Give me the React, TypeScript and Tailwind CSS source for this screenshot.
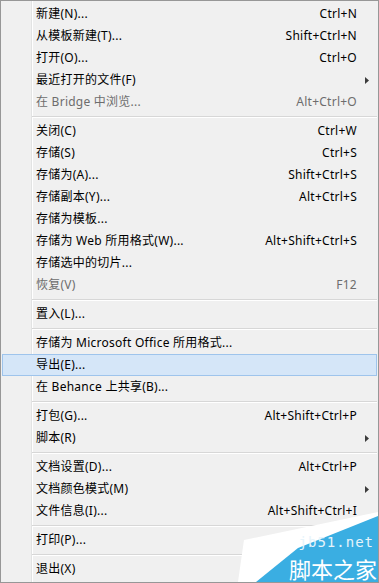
import React from 'react';

type Item =
  | { kind: 'sep' }
  | { kind: 'item'; label: string; shortcut?: string; disabled?: boolean; submenu?: boolean; active?: boolean };

const items: Item[] = [
  { kind: 'item', label: '新建(N)...', shortcut: 'Ctrl+N' },
  { kind: 'item', label: '从模板新建(T)...', shortcut: 'Shift+Ctrl+N' },
  { kind: 'item', label: '打开(O)...', shortcut: 'Ctrl+O' },
  { kind: 'item', label: '最近打开的文件(F)', submenu: true },
  { kind: 'item', label: '在 Bridge 中浏览...', shortcut: 'Alt+Ctrl+O', disabled: true },
  { kind: 'sep' },
  { kind: 'item', label: '关闭(C)', shortcut: 'Ctrl+W' },
  { kind: 'item', label: '存储(S)', shortcut: 'Ctrl+S' },
  { kind: 'item', label: '存储为(A)...', shortcut: 'Shift+Ctrl+S' },
  { kind: 'item', label: '存储副本(Y)...', shortcut: 'Alt+Ctrl+S' },
  { kind: 'item', label: '存储为模板...' },
  { kind: 'item', label: '存储为 Web 所用格式(W)...', shortcut: 'Alt+Shift+Ctrl+S' },
  { kind: 'item', label: '存储选中的切片...' },
  { kind: 'item', label: '恢复(V)', shortcut: 'F12', disabled: true },
  { kind: 'sep' },
  { kind: 'item', label: '置入(L)...' },
  { kind: 'sep' },
  { kind: 'item', label: '存储为 Microsoft Office 所用格式...' },
  { kind: 'item', label: '导出(E)...', active: true },
  { kind: 'item', label: '在 Behance 上共享(B)...' },
  { kind: 'sep' },
  { kind: 'item', label: '打包(G)...', shortcut: 'Alt+Shift+Ctrl+P' },
  { kind: 'item', label: '脚本(R)', submenu: true },
  { kind: 'sep' },
  { kind: 'item', label: '文档设置(D)...', shortcut: 'Alt+Ctrl+P' },
  { kind: 'item', label: '文档颜色模式(M)', submenu: true },
  { kind: 'item', label: '文件信息(I)...', shortcut: 'Alt+Shift+Ctrl+I' },
  { kind: 'sep' },
  { kind: 'item', label: '打印(P)...' },
  { kind: 'sep' },
  { kind: 'item', label: '退出(X)' },
];

const App: React.FC = () => {
  return (
    <div
      className="relative w-[379px] h-[583px] overflow-hidden border border-[#979797] px-[1px] pt-[2px] text-[12px] tracking-[0.25px] text-black bg-[linear-gradient(to_right,#f0f0f0_30px,#e2e3e3_30px,#e2e3e3_31px,#ffffff_31px,#ffffff_32px,#f0f0f0_32px)]"
      style={{ fontFamily: '"Noto Sans", "Noto Sans CJK SC", sans-serif' }}
    >
      {items.map((it, idx) =>
        it.kind === 'sep' ? (
          <div key={idx} className="h-[7px] pt-[3px] pl-[30px]">
            <div className="border-t border-[#d7d7d7] border-b border-b-white" />
          </div>
        ) : (
          <div
            key={idx}
            className={`flex items-center h-[22px] pl-[33px] leading-none border ${
              it.active ? 'bg-[#d5e6f8] border-[#9ec4ec]' : 'border-transparent'
            } ${it.disabled ? 'text-[#6d6d6d]' : 'text-black'}`}
          >
            <span className="flex-1 whitespace-nowrap">{it.label}</span>
            {it.shortcut && <span className="whitespace-nowrap">{it.shortcut}</span>}
            <span className="w-[19px] flex justify-center">
              {it.submenu && (
                <svg width="4" height="7" viewBox="0 0 4 7">
                  <path d="M0 0 L4 3.5 L0 7 Z" fill="#3c3c3c" />
                </svg>
              )}
            </span>
          </div>
        )
      )}

      {/* watermark */}
      <div className="absolute right-0 bottom-0 w-[140px] h-[72px]">
        <svg className="absolute inset-0" width="140" height="72" viewBox="0 0 140 72">
          <polygon points="0,72 6,30 140,2 140,72" fill="#ffffff" />
          <polygon points="18,72 60,38 140,6 140,72" fill="#3aaee2" />
        </svg>
        <div className="absolute right-[4px] top-[25px] text-[14px] leading-none text-[#e6f4fb] tracking-[1px]" style={{ fontFamily: '"DejaVu Sans Mono", monospace' }}>
          jb51.net
        </div>
        <div className="absolute right-[1px] bottom-0 text-[22px] leading-[26px] tracking-normal text-white">脚本之家</div>
      </div>
    </div>
  );
};

export default App;
